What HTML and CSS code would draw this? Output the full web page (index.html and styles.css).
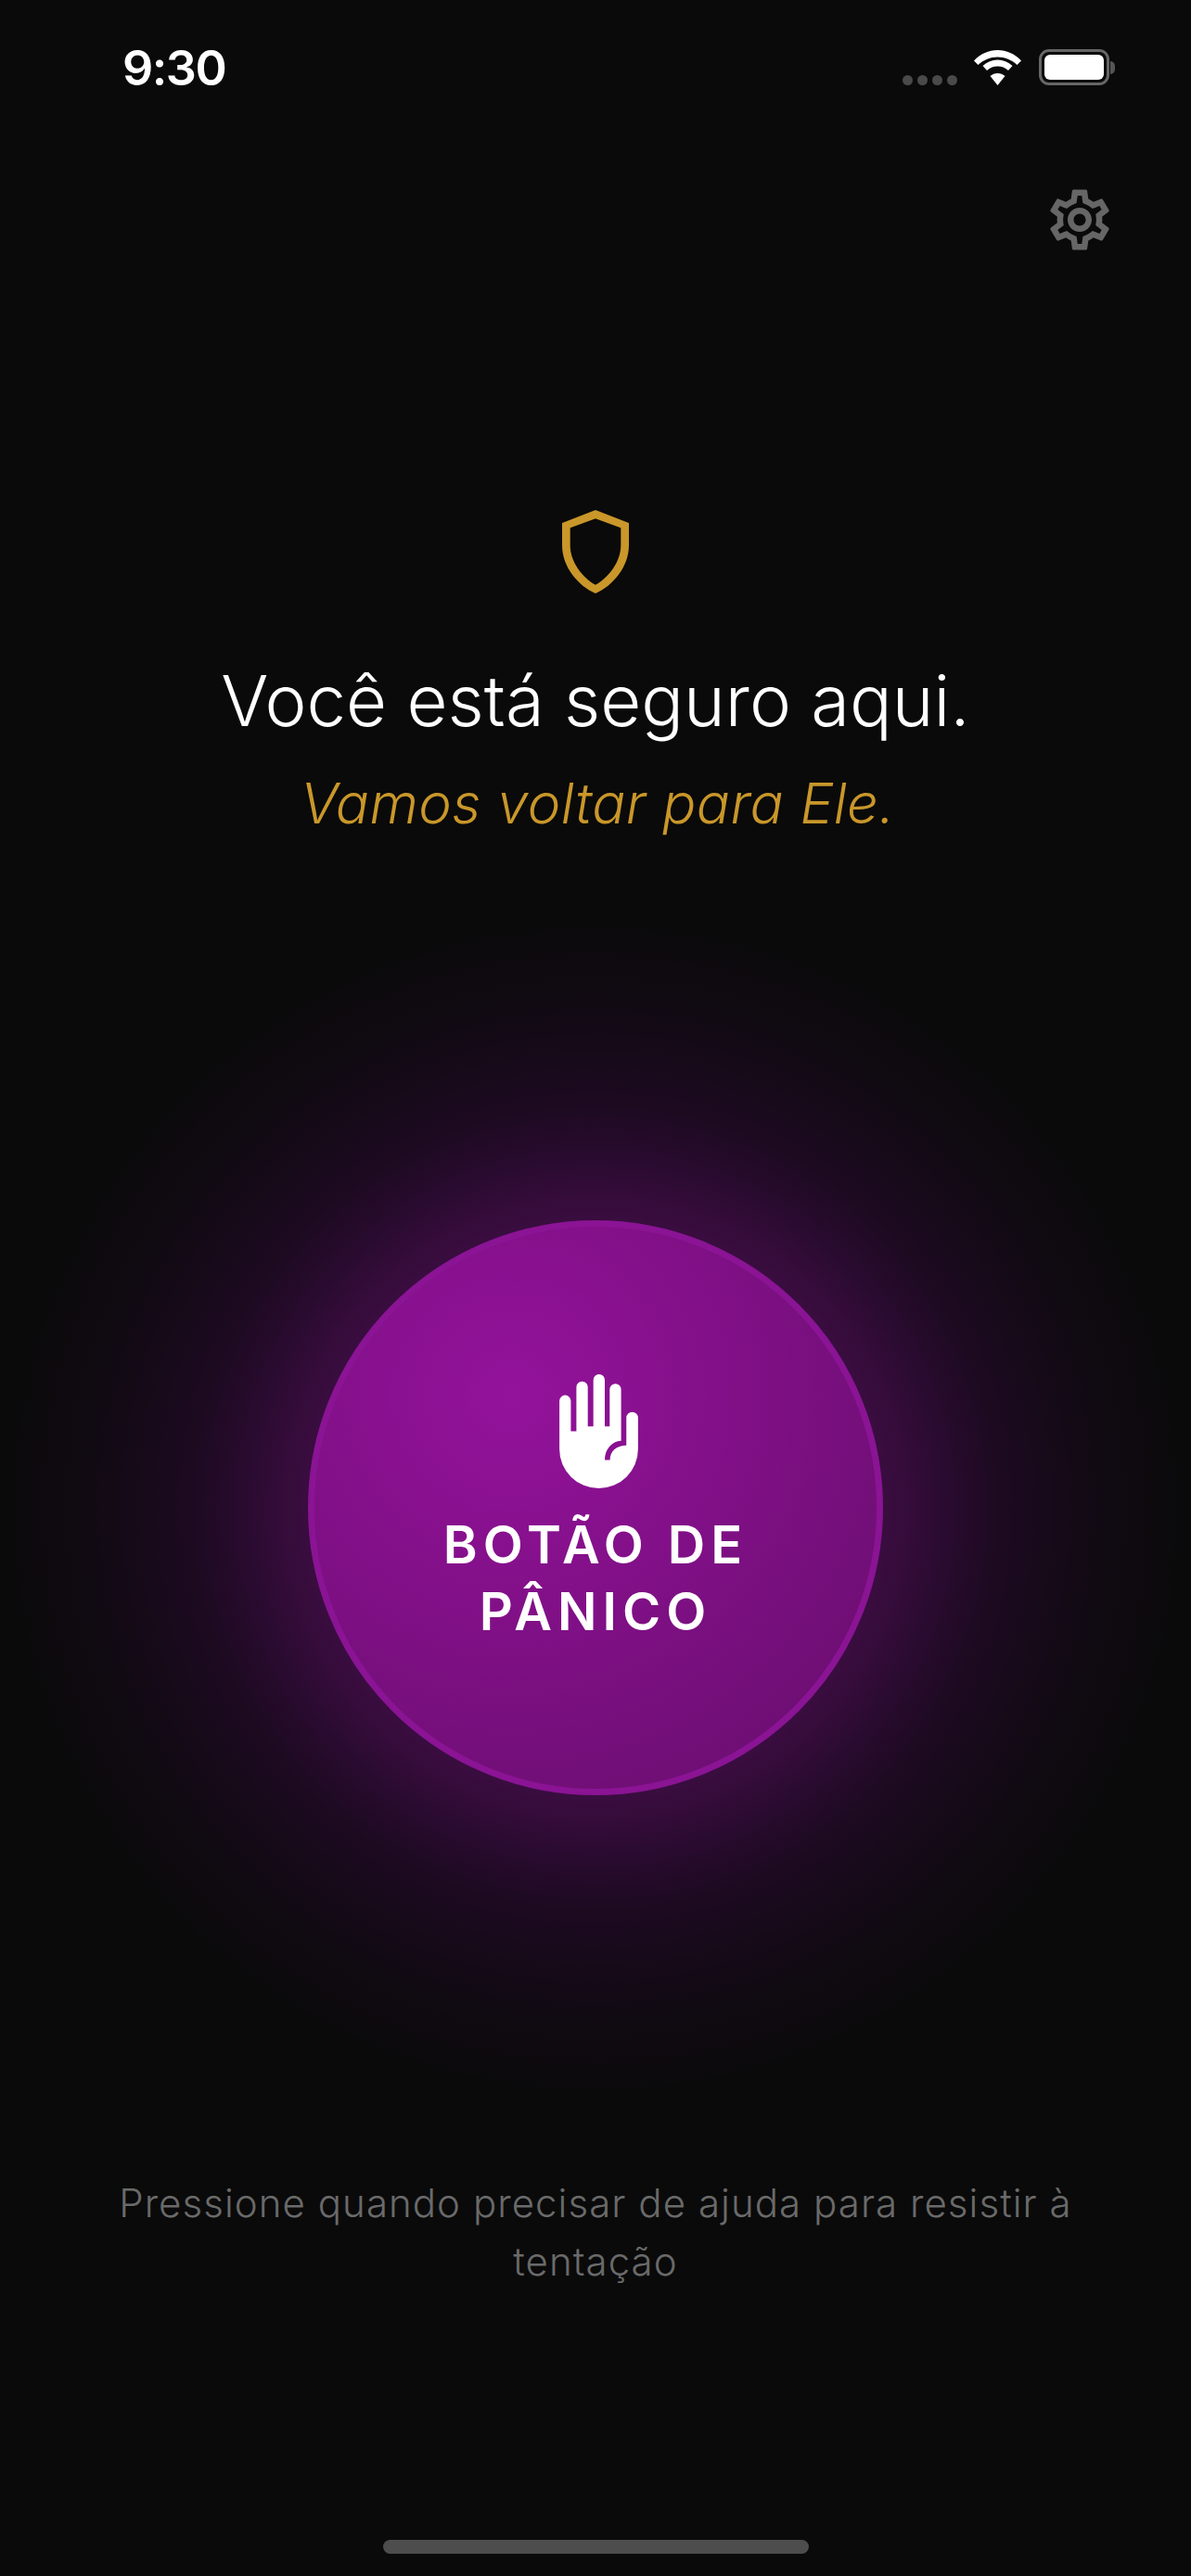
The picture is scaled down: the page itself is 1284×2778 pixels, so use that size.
FILE: index.html
```html
<!DOCTYPE html>
<html lang="pt-BR">
<head>
    <meta charset="UTF-8">
    <meta name="viewport" content="width=device-width, initial-scale=1.0">
    <title>Botão de Pânico</title>
    <link rel="stylesheet" href="styles.css">
</head>
<body>
    <div class="screen">
        <div class="status-bar">
            <span class="time">9:30</span>
            <div class="status-icons">
                <div class="signal">
                    <span></span><span></span><span></span><span></span>
                </div>
                <svg class="wifi" viewBox="0 0 51 38" fill="#fff">
                    <path d="M25.500 0C35 0 44 4 51 11.500L46.500 16C40.500 10.500 33.500 7.500 25.500 7.500C17.500 7.500 10.500 10.500 4.500 16L0 11.500C7 4 16 0 25.500 0Z"/>
                    <path d="M25.500 10.500C31.500 10.500 37 12.800 41.500 17L37 22C33.500 18.800 29.800 17.500 25.500 17.500C21.200 17.500 17.500 18.800 14 22L9.500 17C14 12.800 19.500 10.500 25.500 10.500Z"/>
                    <path d="M25.500 25C28.500 25 31 26 33.500 28L25.500 38L17.500 28C20 26 22.500 25 25.500 25Z"/>
                </svg>
                <div class="battery">
                    <div class="battery-body"><div class="battery-fill"></div></div>
                    <div class="battery-nub"></div>
                </div>
            </div>
        </div>

        <div class="top-actions">
            <svg class="gear" viewBox="0 0 24 24" fill="#666">
                <path d="M19.43 12.98c.04-.32.07-.64.07-.98 0-.34-.03-.66-.07-.98l2.11-1.65c.19-.15.24-.42.12-.64l-2-3.46c-.09-.16-.26-.25-.44-.25-.06 0-.12.01-.17.03l-2.49 1c-.52-.4-1.08-.73-1.69-.98l-.38-2.65C14.46 2.18 14.25 2 14 2h-4c-.25 0-.46.18-.49.42l-.38 2.65c-.61.25-1.17.59-1.69.98l-2.49-1c-.06-.02-.12-.03-.18-.03-.17 0-.34.09-.43.25l-2 3.46c-.13.22-.07.49.12.64l2.11 1.65c-.04.32-.07.65-.07.98 0 .33.03.66.07.98l-2.11 1.65c-.19.15-.24.42-.12.64l2 3.46c.09.16.26.25.44.25.06 0 .12-.01.17-.03l2.49-1c.52.4 1.08.73 1.69.98l.38 2.65c.03.24.24.42.49.42h4c.25 0 .46-.18.49-.42l.38-2.65c.61-.25 1.17-.59 1.69-.98l2.49 1c.06.02.12.03.18.03.17 0 .34-.09.43-.25l2-3.46c.12-.22.07-.49-.12-.64l-2.11-1.65zm-1.98-1.71c.04.31.05.52.05.73 0 .21-.02.43-.05.73l-.14 1.13.89.7 1.08.84-.7 1.21-1.27-.51-1.04-.42-.9.68c-.43.32-.84.56-1.25.73l-1.06.43-.16 1.13-.2 1.35h-1.4l-.19-1.35-.16-1.13-1.06-.43c-.43-.18-.83-.41-1.23-.71l-.91-.7-1.06.43-1.27.51-.7-1.21 1.08-.84.89-.7-.14-1.13c-.03-.31-.05-.54-.05-.74s.02-.43.05-.73l.14-1.13-.89-.7-1.08-.84.7-1.21 1.27.51 1.04.42.9-.68c.43-.32.84-.56 1.25-.73l1.06-.43.16-1.13.2-1.35h1.39l.19 1.35.16 1.13 1.06.43c.43.18.83.41 1.23.71l.91.7 1.06-.43 1.27-.51.7 1.21-1.07.85-.89.7.14 1.13zM12 8c-2.21 0-4 1.79-4 4s1.79 4 4 4 4-1.79 4-4-1.79-4-4-4zm0 6c-1.1 0-2-.9-2-2s.9-2 2-2 2 .9 2 2-.9 2-2 2z"/>
            </svg>
        </div>

        <div class="intro">
            <svg class="shield" viewBox="0 0 72 90" fill="#c9972a" fill-rule="evenodd">
                <path d="M36 0L72 14V38C72 62 54 82 36 90C18 82 0 62 0 38V14ZM36 9.300L8.700 19.300V38C8.700 56 22 73 36 80.700C50 73 63.300 56 63.300 38V19.300Z"/>
            </svg>
            <h1>Você está seguro aqui.</h1>
            <p class="subtitle">Vamos voltar para Ele.</p>
        </div>

        <div class="glow">
            <button class="panic-button">
                <svg class="hand" viewBox="0 0 255 370" fill="#fff">
                    <path d="M0 86.500a18.500 18.500 0 0 1 37 0V185H55V41.500a18.500 18.500 0 0 1 37 0V169H110V18.500a18.500 18.500 0 0 1 37 0V169H163V49.500a18.500 18.500 0 0 1 37 0V216C170 218 147 243 147 278H164C164 250 185 231 217 231V141.500a19 19 0 0 1 38 0V243a127.500 127 0 0 1 -255 0Z"/>
                </svg>
                <span class="panic-label">BOTÃO DE PÂNICO</span>
            </button>
        </div>

        <p class="hint">Pressione quando precisar de ajuda para resistir à tentação</p>

        <div class="home-indicator"></div>
    </div>
</body>
</html>
```

FILE: styles.css
```css
* {
    box-sizing: border-box;
}

body {
    margin: 0;
    background-color: #0a0a0a;
    font-family: Inter, "Noto Sans", sans-serif;
    color: #fff;
}

.screen {
    width: 1284px;
    height: 2778px;
    display: flex;
    flex-direction: column;
    overflow: hidden;
}

.status-bar {
    height: 110px;
    padding: 44px 82px 0 132px;
    display: flex;
    justify-content: space-between;
    align-items: flex-start;
}

.time {
    font-size: 52px;
    font-weight: 600;
    line-height: 60px;
    letter-spacing: -1.5px;
}

.status-icons {
    display: flex;
    align-items: flex-end;
    padding-top: 9px;
}

.signal {
    display: flex;
    gap: 5px;
    margin-right: 18px;
}

.signal span {
    width: 11px;
    height: 11px;
    border-radius: 50%;
    background-color: #4a4a4a;
}

.wifi {
    width: 51px;
    height: 38px;
    margin-right: 19px;
}

.battery {
    display: flex;
    align-items: center;
}

.battery-body {
    width: 76px;
    height: 39px;
    padding: 3px;
    border: 3px solid #666;
    border-radius: 11px;
}

.battery-fill {
    width: 100%;
    height: 100%;
    background-color: #fff;
    border-radius: 6px;
}

.battery-nub {
    width: 5px;
    height: 14px;
    margin-left: 1px;
    background-color: #555;
    border-radius: 0 7px 7px 0;
}

.top-actions {
    height: 78px;
    margin-top: 88px;
    padding-right: 81px;
    display: flex;
    justify-content: flex-end;
}

.gear {
    width: 78px;
    height: 78px;
}

.intro {
    margin-top: 274px;
    display: flex;
    flex-direction: column;
    align-items: center;
}

.shield {
    width: 72px;
    height: 90px;
}

h1 {
    margin: 68px 0 0;
    font-size: 76px;
    font-weight: 300;
    line-height: 94px;
}

.subtitle {
    margin: 28px 0 0;
    padding-left: 5px;
    font-size: 60px;
    font-style: italic;
    font-weight: 300;
    line-height: 72px;
    letter-spacing: 0.45px;
    color: #c9972a;
}

.glow {
    height: 1300px;
    margin-top: 74px;
    display: flex;
    align-items: center;
    justify-content: center;
    background: radial-gradient(circle closest-side, #3a0d40 47.7%, #350c3a 52.3%, #2a0b30 58.5%, #1d0a21 67.7%, #120a14 83%, #0a0a0a 100%);
}

.panic-button {
    width: 620px;
    height: 620px;
    padding: 0;
    border: 7px solid #8a1494;
    border-radius: 50%;
    background: radial-gradient(circle at 35% 30%, #93139b 0%, #84108a 35%, #650e6b 100%);
    color: #fff;
    font-family: inherit;
    display: flex;
    flex-direction: column;
    align-items: center;
}

.hand {
    width: 85px;
    height: 123px;
    margin: 159px 0 0 7px;
}

.panic-label {
    width: 400px;
    margin-top: 25px;
    font-size: 56px;
    font-weight: 600;
    line-height: 72px;
    letter-spacing: 6px;
    text-align: center;
}

.hint {
    margin: 68px 120px 0;
    font-size: 42px;
    font-weight: 300;
    line-height: 63px;
    letter-spacing: 1.05px;
    text-align: center;
    color: #6a6a6a;
}

.home-indicator {
    width: 459px;
    height: 15px;
    margin: auto auto 24px;
    background-color: #4d4d4d;
    border-radius: 8px;
}
```
